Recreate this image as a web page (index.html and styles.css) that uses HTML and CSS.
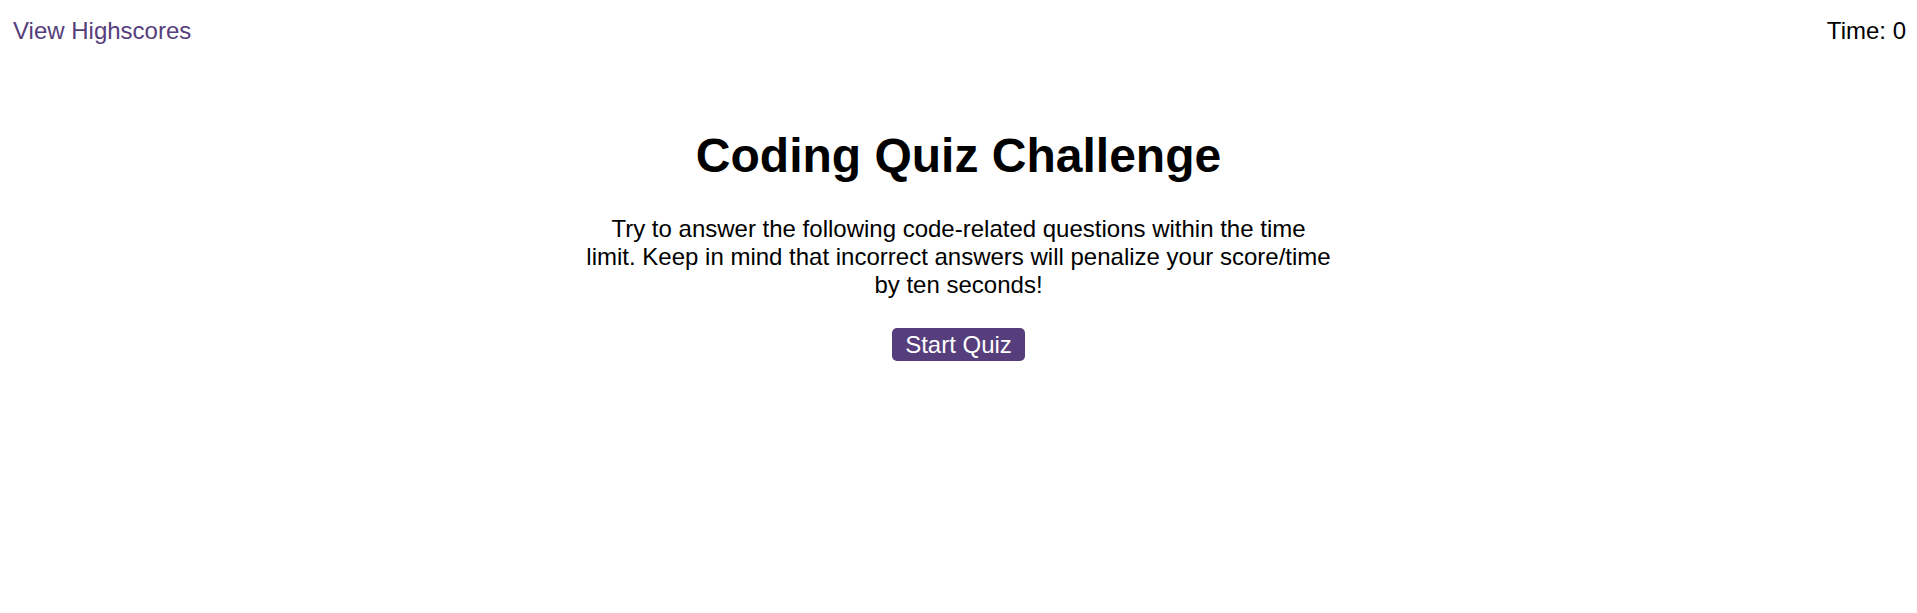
FILE: index.html
```html
<!DOCTYPE html>
<html lang="en">
<head>
<meta charset="utf-8">
<title>Coding Quiz Challenge</title>
<link rel="stylesheet" href="styles.css">
</head>
<body>
<header class="top-bar">
  <a class="highscores-link" href="#">View Highscores</a>
  <div class="timer">Time: <span class="timer-value">0</span></div>
</header>
<main class="intro">
  <h1 class="intro-title">Coding Quiz Challenge</h1>
  <p class="intro-text">Try to answer the following code-related questions within the time limit. Keep in mind that incorrect answers will penalize your score/time by ten seconds!</p>
  <button class="start-button" type="button">Start Quiz</button>
</main>
</body>
</html>
```

FILE: styles.css
```css
html, body {
  margin: 0;
  padding: 0;
  background: #ffffff;
}

body {
  font-family: "Liberation Sans", Arial, sans-serif;
  color: #000000;
}

.top-bar {
  display: flex;
  justify-content: space-between;
  align-items: flex-start;
  padding: 17px 11px 0 13px;
  font-size: 24px;
}

.highscores-link {
  color: #563d7c;
  text-decoration: none;
}

.timer {
  color: #000000;
}

.intro {
  display: flex;
  flex-direction: column;
  align-items: center;
  padding-top: 83px;
}

.intro-title {
  margin: 0;
  font-size: 48px;
  font-weight: bold;
}

.intro-text {
  width: 748px;
  margin: 32px 0 0 0;
  font-size: 24px;
  text-align: center;
}

.start-button {
  margin-top: 29px;
  padding: 3px 13px;
  border: none;
  border-radius: 5px;
  background: #563d7c;
  color: #ffffff;
  font-family: "Liberation Sans", Arial, sans-serif;
  font-size: 24px;
  line-height: 27px;
  cursor: pointer;
}
```
